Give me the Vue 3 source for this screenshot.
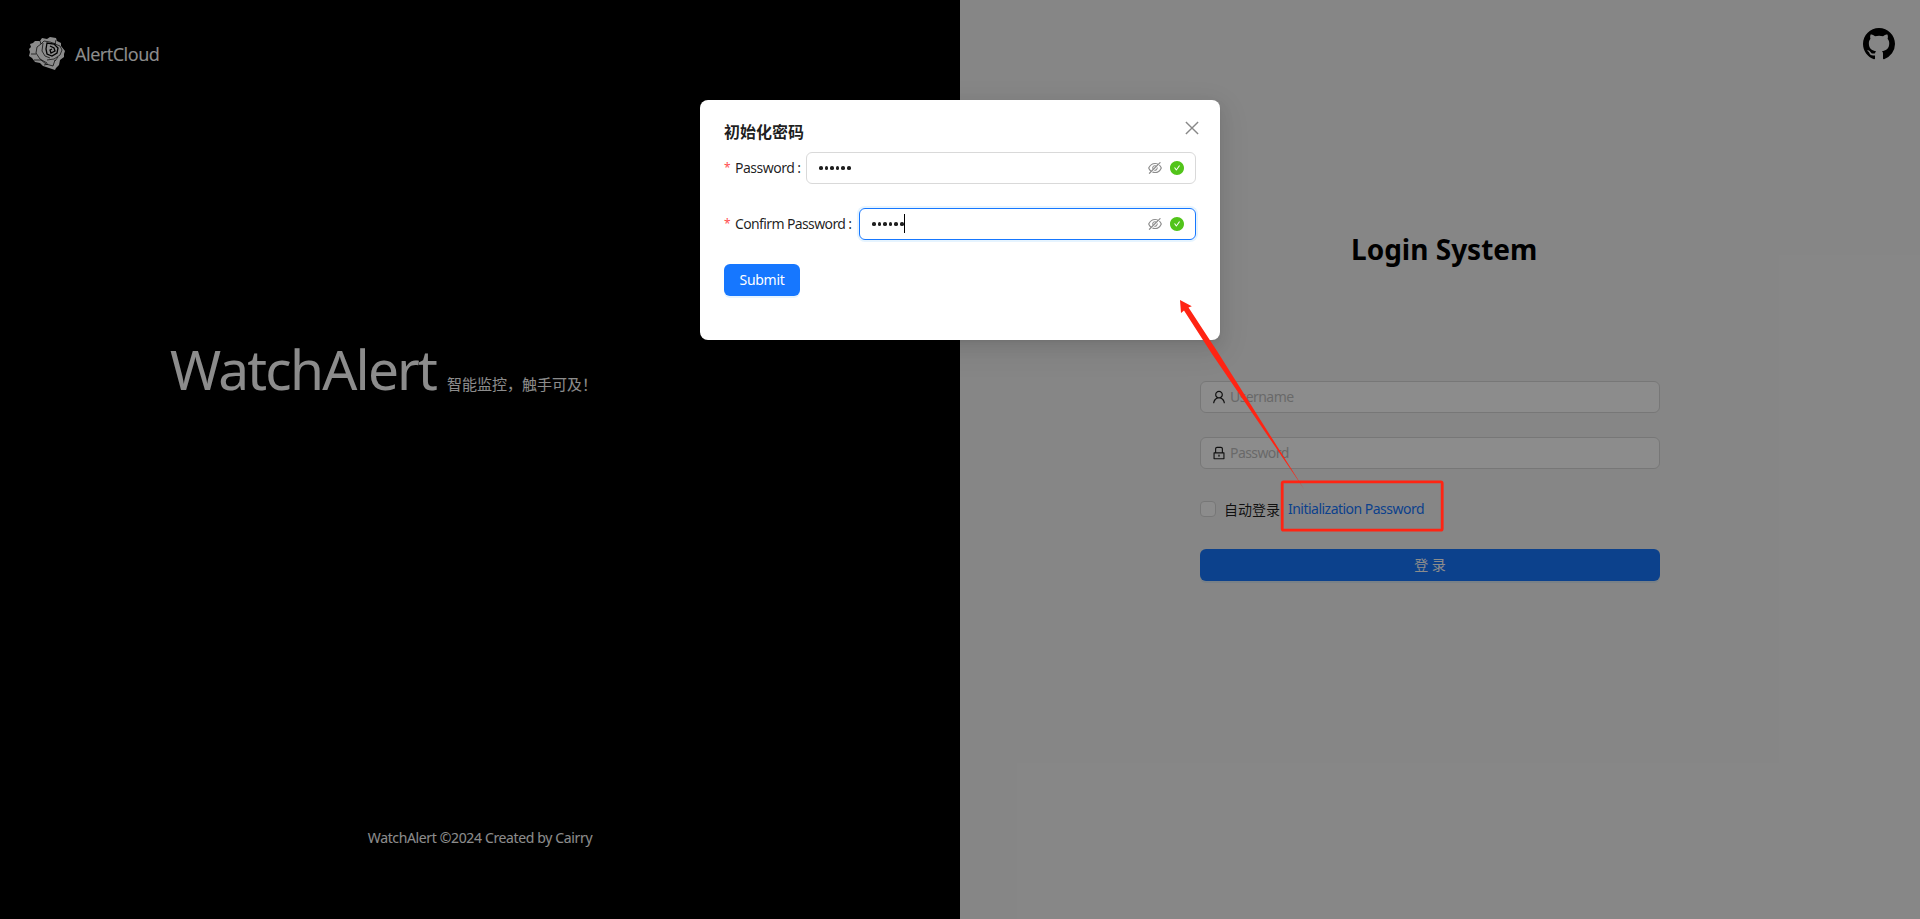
<script setup>
const eye = 'M942.2 486.2Q889.47 375.11 816.7 305l-50.88 50.88C807.31 395.53 843.45 447.4 874.7 512 791.5 684.2 673.4 766 512 766q-72.67 0-133.87-22.38L323 798.75Q408 838 512 838q288.3 0 430.2-300.3a60.29 60.29 0 000-51.5zm-63.57-320.64L836 122.88a8 8 0 00-11.32 0L715.31 232.2Q624.86 186 512 186q-288.3 0-430.2 300.3a60.3 60.3 0 000 51.5q56.69 119.4 136.5 191.41L112.48 835a8 8 0 000 11.31L155.17 889a8 8 0 0011.31 0l712.15-712.12a8 8 0 000-11.32zM149.3 512C232.6 339.8 350.7 258 512 258c54.54 0 104.13 9.36 149.12 28.39l-70.3 70.3a176 176 0 00-238.13 238.13l-83.42 83.42C223.1 637.49 183.3 582.28 149.3 512zm246.7 0a112.11 112.11 0 01146.2-106.69L401.31 546.2A112 112 0 01396 512zM508 624c-3.46 0-6.87-.16-10.25-.47l-52.82 52.82a176.09 176.09 0 00227.42-227.42l-52.82 52.82c.31 3.38.47 6.79.47 10.25a111.94 111.94 0 01-112 112z'
const check = 'M512 64C264.6 64 64 264.6 64 512s200.6 448 448 448 448-200.6 448-448S759.4 64 512 64zm193.5 301.7l-210.6 292a31.8 31.8 0 01-51.7 0L318.5 484.9c-3.8-5.3 0-12.7 6.5-12.7h46.9c10.2 0 19.9 4.9 25.9 13.3l71.2 98.8 157.2-218c6-8.3 15.6-13.3 25.9-13.3H699c6.5 0 10.3 7.4 6.5 12.7z'
const user = 'M858.5 763.6a374 374 0 00-80.6-119.5 375.63 375.63 0 00-119.5-80.6c-.4-.2-.8-.3-1.2-.5C719.5 518 760 444.7 760 362c0-137-111-248-248-248S264 225 264 362c0 82.7 40.5 156 102.8 201.1-.4.2-.8.3-1.2.5-44.8 18.9-85 46-119.5 80.6a375.63 375.63 0 00-80.6 119.5A371.7 371.7 0 00136 901.8a8 8 0 008 8.2h60c4.4 0 7.9-3.5 8-7.8 2-77.2 33-149.5 87.8-204.3 56.7-56.7 132-87.9 212.2-87.9s155.5 31.2 212.2 87.9C779 752.7 810 825 812 902.2c.1 4.4 3.6 7.8 8 7.8h60a8 8 0 008-8.2c-1-47.8-10.9-94.3-29.5-138.2zM512 534c-45.9 0-89.1-17.9-121.6-50.4S340 407.9 340 362c0-45.9 17.9-89.1 50.4-121.6S466.1 190 512 190s89.1 17.9 121.6 50.4S684 316.1 684 362c0 45.9-17.9 89.1-50.4 121.6S557.9 534 512 534z'
const lock = 'M832 464h-68V240c0-70.7-57.3-128-128-128H388c-70.7 0-128 57.3-128 128v224h-68c-17.7 0-32 14.3-32 32v384c0 17.7 14.3 32 32 32h640c17.7 0 32-14.3 32-32V496c0-17.7-14.3-32-32-32zM332 240c0-30.9 25.1-56 56-56h248c30.9 0 56 25.1 56 56v224H332V240zm460 600H232V536h560v304zM484 701v53c0 4.4 3.6 8 8 8h40c4.4 0 8-3.6 8-8v-53a48.01 48.01 0 10-56 0z'
const loginFields = [
  { label: 'Username', icon: user },
  { label: 'Password', icon: lock },
]
const modalFields = [
  { label: 'Password', cls: 'lb-pass', focus: false },
  { label: 'Confirm Password', cls: 'lb-confirm', focus: true },
]
</script>

<template>
  <div class="page">
    <section class="left">
      <header class="brand">
        <svg class="rose" viewBox="0 0 36 34">
          <path fill="#fff" d="M6 4l5 0 2-3 5 1 3-2 6 1 1 3 4 2 0 3 4 5-1 3 0 3-4 3-1 5-3 3-1 2-6-2-6-2-3-3-5-1-3-4-3-2 1-4-1-3 2-2-1-3 3-1z" />
          <g fill="none" stroke="#000" stroke-width=".7">
            <path d="M11 4l1 3-4 3-1 6 4 6 7 4M12 7l3-3 6 1 6 2M14 6l-1 8 3 5 5 2M27 3l-1 4 5 2 2 4-2 5-6 4-7 1" />
            <path d="M2 17l5 0M5 23l7 0 5 4 7 2 2-6M15 28l4-1M29 20l-3 4" />
          </g>
          <g fill="none" stroke="#000" stroke-width="1.3">
            <path d="M18 6l-1 6 1 5 5 2 5-3 1-5-4-4zM21 9l4 2 1 3-4 2-1-3 2-1" />
          </g>
        </svg>
        <span class="brand-name">AlertCloud</span>
      </header>
      <div class="hero">
        <span class="hero-name">WatchAlert</span>
        <span class="hero-sub">智能监控，触手可及！</span>
      </div>
      <footer class="foot"><span>WatchAlert ©2024 Created by Cairry</span></footer>
    </section>

    <section class="right">
      <svg class="github" viewBox="0 0 16 16"><path d="M8 0C3.58 0 0 3.58 0 8c0 3.54 2.29 6.53 5.47 7.59.4.07.55-.17.55-.38 0-.19-.01-.82-.01-1.49-2.01.37-2.53-.49-2.69-.94-.09-.23-.48-.94-.82-1.13-.28-.15-.68-.52-.01-.53.63-.01 1.08.58 1.23.82.72 1.21 1.87.87 2.33.66.07-.52.28-.87.51-1.07-1.78-.2-3.64-.89-3.64-3.95 0-.87.31-1.59.82-2.15-.08-.2-.36-1.02.08-2.12 0 0 .67-.21 2.2.82.64-.18 1.32-.27 2-.27s1.36.09 2 .27c1.53-1.04 2.2-.82 2.2-.82.44 1.1.16 1.92.08 2.12.51.56.82 1.27.82 2.15 0 3.07-1.87 3.75-3.65 3.95.29.25.54.73.54 1.48 0 1.07-.01 1.93-.01 2.2 0 .21.15.46.55.38A8.01 8.01 0 0016 8c0-4.42-3.58-8-8-8z" /></svg>
      <h1 class="title">Login System</h1>
      <form class="login">
        <div v-for="f in loginFields" :key="f.label" class="field">
          <svg class="ico" viewBox="64 64 896 896"><path :d="f.icon" /></svg>
          <span class="placeholder">{{ f.label }}</span>
        </div>
        <div class="options">
          <i class="checkbox"></i>
          <span class="auto">自动登录</span>
          <a class="init">Initialization Password</a>
        </div>
        <div class="login-btn">登 录</div>
      </form>
    </section>

    <div class="mask">
      <div class="modal">
        <svg class="close" viewBox="0 0 14 14"><path d="M.9 .9l12.2 12.2M13.1 .9L.9 13.1" /></svg>
        <div class="modal-title">初始化密码</div>
        <div v-for="f in modalFields" :key="f.label" class="row">
          <label class="label" :class="f.cls"><b>*</b><span class="label-text">{{ f.label }}</span><i>:</i></label>
          <div class="input" :class="{ focus: f.focus }">
            <span class="dots"><em v-for="n in 6" :key="n"></em></span>
            <span v-if="f.focus" class="caret"></span>
            <svg class="eye" viewBox="64 64 896 896"><path :d="eye" /></svg>
            <svg class="ok" viewBox="64 64 896 896"><path :d="check" /></svg>
          </div>
        </div>
        <div class="submit">Submit</div>
      </div>
    </div>

    <svg class="marks" viewBox="0 0 1920 919">
      <rect x="1282.2" y="481.8" width="160" height="48.4" rx="1.5" fill="none" stroke="#ff2413" stroke-width="2.8" />
      <path fill="#ff2413" d="M1180 300L1191.8 306.2 1188.5 307.5 1217 351 1304 489 1212 354 1184 310.5 1181 313Z" />
    </svg>
  </div>
</template>

<style>
body { margin: 0; overflow: hidden; }
</style>

<style scoped>
* { box-sizing: border-box; }
.page {
  position: relative;
  display: flex;
  width: 1920px;
  height: 919px;
  overflow: hidden;
  font: 14px/22px "Noto Sans", "Noto Sans CJK SC", sans-serif;
  white-space: nowrap;
}
.left { width: 960px; display: flex; flex-direction: column; background: #000; color: #fff; }
.brand { display: flex; align-items: center; height: 34px; margin: 37px 0 0 29px; }
.rose { width: 36px; height: 34px; }
.brand-name { margin-left: 10px; font-size: 18px; line-height: 34px; letter-spacing: -.5px; }
.hero { display: flex; align-items: baseline; height: 80px; margin: 258px 0 0 170px; line-height: 80px; }
.hero-name { width: 277px; font-size: 55px; letter-spacing: -1.8px; }
.hero-sub { font-size: 15px; }
.foot { margin: auto 0 70px; text-align: center; }
.foot span { letter-spacing: -.36px; }
.right { width: 960px; display: flex; flex-direction: column; background: #f5f5f5; }
.github { width: 32px; height: 32px; margin: 28px 25px 0 auto; }
.title { height: 40px; margin: 169px 0 0 391px; font-size: 28px; line-height: 40px; color: #000; }
.login { width: 460px; margin: 112px 0 0 240px; display: flex; flex-direction: column; gap: 24px; }
.field { display: flex; align-items: center; height: 32px; padding: 0 11px; border: 1px solid #d9d9d9; border-radius: 6px; background: #fff; }
.ico { width: 14px; height: 14px; margin-right: 4px; fill: rgba(0,0,0,.88); }
.placeholder { color: #bfbfbf; letter-spacing: -.58px; }
.options { display: flex; align-items: center; height: 32px; color: rgba(0,0,0,.88); }
.checkbox { width: 16px; height: 16px; border: 1px solid #d9d9d9; border-radius: 4px; background: #fff; }
.auto { width: 64px; margin-left: 8px; font-family: "Noto Sans CJK SC", sans-serif; }
.init { color: #1677ff; letter-spacing: -.52px; }
.login-btn { height: 32px; border-radius: 6px; background: #1677ff; box-shadow: 0 2px 0 rgba(5,145,255,.1); color: #fff; text-align: center; line-height: 32px; }
.mask { position: absolute; inset: 0; background: rgba(0,0,0,.45); }
.modal {
  position: relative;
  width: 520px;
  height: 240px;
  margin: 100px auto 0;
  padding: 19px 24px;
  border-radius: 8px;
  background: #fff;
  color: rgba(0,0,0,.88);
  box-shadow: 0 6px 16px rgba(0,0,0,.08), 0 3px 6px -4px rgba(0,0,0,.12), 0 9px 28px 8px rgba(0,0,0,.05);
}
.close { position: absolute; top: 21px; right: 21px; width: 14px; height: 14px; fill: none; stroke: #888; stroke-width: 1.4; }
.modal-title { height: 24px; margin-bottom: 9px; font: 700 16px/24px "Noto Sans CJK SC", sans-serif; }
.row { display: flex; align-items: center; height: 32px; margin-bottom: 24px; }
.label { display: flex; align-items: center; flex: none; }
.lb-pass { width: 82px; }
.lb-confirm { width: 135px; }
.label b { flex: none; width: 11px; color: #ff4d4f; font-weight: 400; font-size: 12px; }
.label-text { letter-spacing: -.5px; }
.lb-confirm .label-text { letter-spacing: -.62px; }
.label i { margin-left: 3px; font-style: normal; }
.input { display: flex; align-items: center; flex: 1; height: 32px; padding: 0 11px 0 12px; border: 1px solid #d9d9d9; border-radius: 6px; }
.focus { border-color: #1677ff; box-shadow: 0 0 0 2px rgba(5,145,255,.1); }
.dots { display: flex; gap: 1.9px; }
.dots em { width: 3.7px; height: 3.7px; border-radius: 50%; background: #1f1f1f; }
.caret { width: 1px; height: 19px; margin-bottom: 2px; background: #000; }
.eye { width: 14px; height: 14px; margin-left: auto; fill: rgba(0,0,0,.45); }
.ok { width: 14px; height: 14px; margin-left: 8px; fill: #52c41a; }
.submit { width: 76px; height: 32px; border-radius: 6px; background: #1677ff; box-shadow: 0 2px 0 rgba(5,145,255,.1); color: #fff; text-align: center; line-height: 32px; letter-spacing: -.3px; }
.marks { position: absolute; inset: 0; width: 1920px; height: 919px; }
</style>
